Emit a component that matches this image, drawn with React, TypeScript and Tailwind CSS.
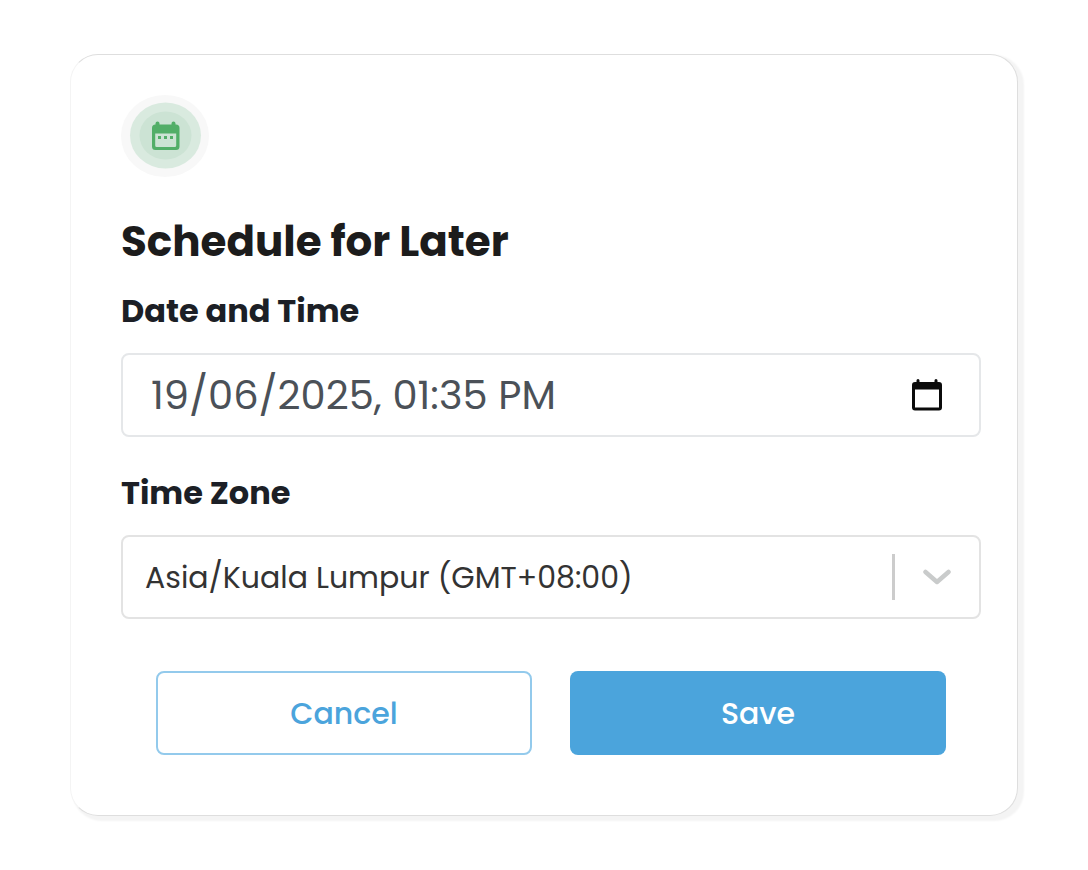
import { useState } from 'react';

const zones = ['Asia/Kuala Lumpur (GMT+08:00)', 'Asia/Tokyo (GMT+09:00)', 'Europe/London (GMT+00:00)'];

function ScheduleBadge() {
  return (
    <svg width="88" height="82" viewBox="0 0 88 82" aria-hidden="true">
      <ellipse cx="44" cy="41" rx="44" ry="41" fill="#f8f8f8" />
      <ellipse cx="44.5" cy="40.5" rx="35.5" ry="33" fill="#d9eadf" />
      <ellipse cx="44.5" cy="40.5" rx="26" ry="24" fill="#cce3d4" />
      <path
        fill="#52ae68"
        fillRule="evenodd"
        d="M34.500 28.500a2 2 0 0 1 4 0v1H50.500v-1a2 2 0 0 1 4 0v1h.5a3.500 3.500 0 0 1 3.500 3.500v18.500a3.500 3.500 0 0 1-3.500 3.500H34.500a3.500 3.500 0 0 1-3.500-3.500V33a3.500 3.500 0 0 1 3.500-3.500zM34.200 38.500v12a1.500 1.500 0 0 0 1.500 1.500h18a1.500 1.500 0 0 0 1.500-1.500v-12z"
      />
      <path fill="#52ae68" d="M37 41h3v3h-3zM43 41h3v3h-3zM49 41h3v3h-3z" />
    </svg>
  );
}

function CalendarIcon() {
  return (
    <svg width="32" height="32" viewBox="0 0 32 32" aria-hidden="true">
      <path
        fill="#0b0b0b"
        fillRule="evenodd"
        d="M5.5 1.500a1.500 1.500 0 0 1 3 0V3h15V1.500a1.500 1.500 0 0 1 3 0V3H28a3 3 0 0 1 3 3v22.500a3 3 0 0 1-3 3H4a3 3 0 0 1-3-3V6a3 3 0 0 1 3-3h1.500zM4 10.500v18h24v-18z"
      />
    </svg>
  );
}

export default function App() {
  const [date, setDate] = useState('19/06/2025, 01:35 PM');
  const [zone, setZone] = useState(zones[0]);

  return (
    <main className="bg-white px-[70px] py-[54px] font-['Poppins','Inter',sans-serif]">
      <form
        onSubmit={(e) => e.preventDefault()}
        className="flex flex-col rounded-[28px] border border-[#dedede] border-l-[#f4f4f4] bg-white pt-10 pr-9 pb-15 pl-[50px] shadow-[4px_3px_2px_2px_#f4f4f4]"
      >
        <ScheduleBadge />
        <h2 className="mt-10 text-[42px] leading-[50px] font-bold text-[#1c1c1c]">Schedule for Later</h2>

        <label htmlFor="date" className="mt-[26px] text-[32px] leading-[36px] font-bold text-[#1c1f26]">
          Date and Time
        </label>
        <div className="mt-6 flex h-[84px] items-center rounded-lg border-2 border-[#e5e7e9] pr-9 pl-7">
          <input
            id="date"
            type="text"
            value={date}
            onChange={(e) => setDate(e.target.value)}
            className="min-w-0 flex-1 bg-transparent text-[40px] text-[#4b5158] outline-none"
          />
          <button type="button" aria-label="Open calendar" className="shrink-0">
            <CalendarIcon />
          </button>
        </div>

        <label htmlFor="zone" className="mt-[38px] text-[32px] leading-[36px] font-bold text-[#1c1f26]">
          Time Zone
        </label>
        <div className="relative mt-6 flex h-[84px] rounded-lg border-2 border-[#e3e3e3]">
          <select
            id="zone"
            value={zone}
            onChange={(e) => setZone(e.target.value)}
            className="min-w-0 flex-1 appearance-none bg-transparent pr-24 pl-[22px] text-[30px] text-[#333333] outline-none"
          >
            {zones.map((z) => (
              <option key={z}>{z}</option>
            ))}
          </select>
          <div className="pointer-events-none absolute inset-y-0 right-0 flex items-center gap-7 pr-7">
            <span className="h-[46px] w-[3px] bg-[#cccccc]" />
            <svg width="28" height="16" viewBox="0 0 28 16" fill="none" aria-hidden="true">
              <path d="M2.500 3 14 13 25.500 3" stroke="#c9cbcb" strokeWidth="4.500" strokeLinecap="round" strokeLinejoin="round" />
            </svg>
          </div>
        </div>

        <div className="mt-[52px] grid grid-cols-2 gap-[38px] px-[35px] text-[30px] font-medium">
          <button type="button" className="h-[84px] rounded-lg border-2 border-[#93caec] text-[#4ba4dc]">
            Cancel
          </button>
          <button type="submit" className="h-[84px] rounded-lg bg-[#4ba4dc] text-white">
            Save
          </button>
        </div>
      </form>
    </main>
  );
}
